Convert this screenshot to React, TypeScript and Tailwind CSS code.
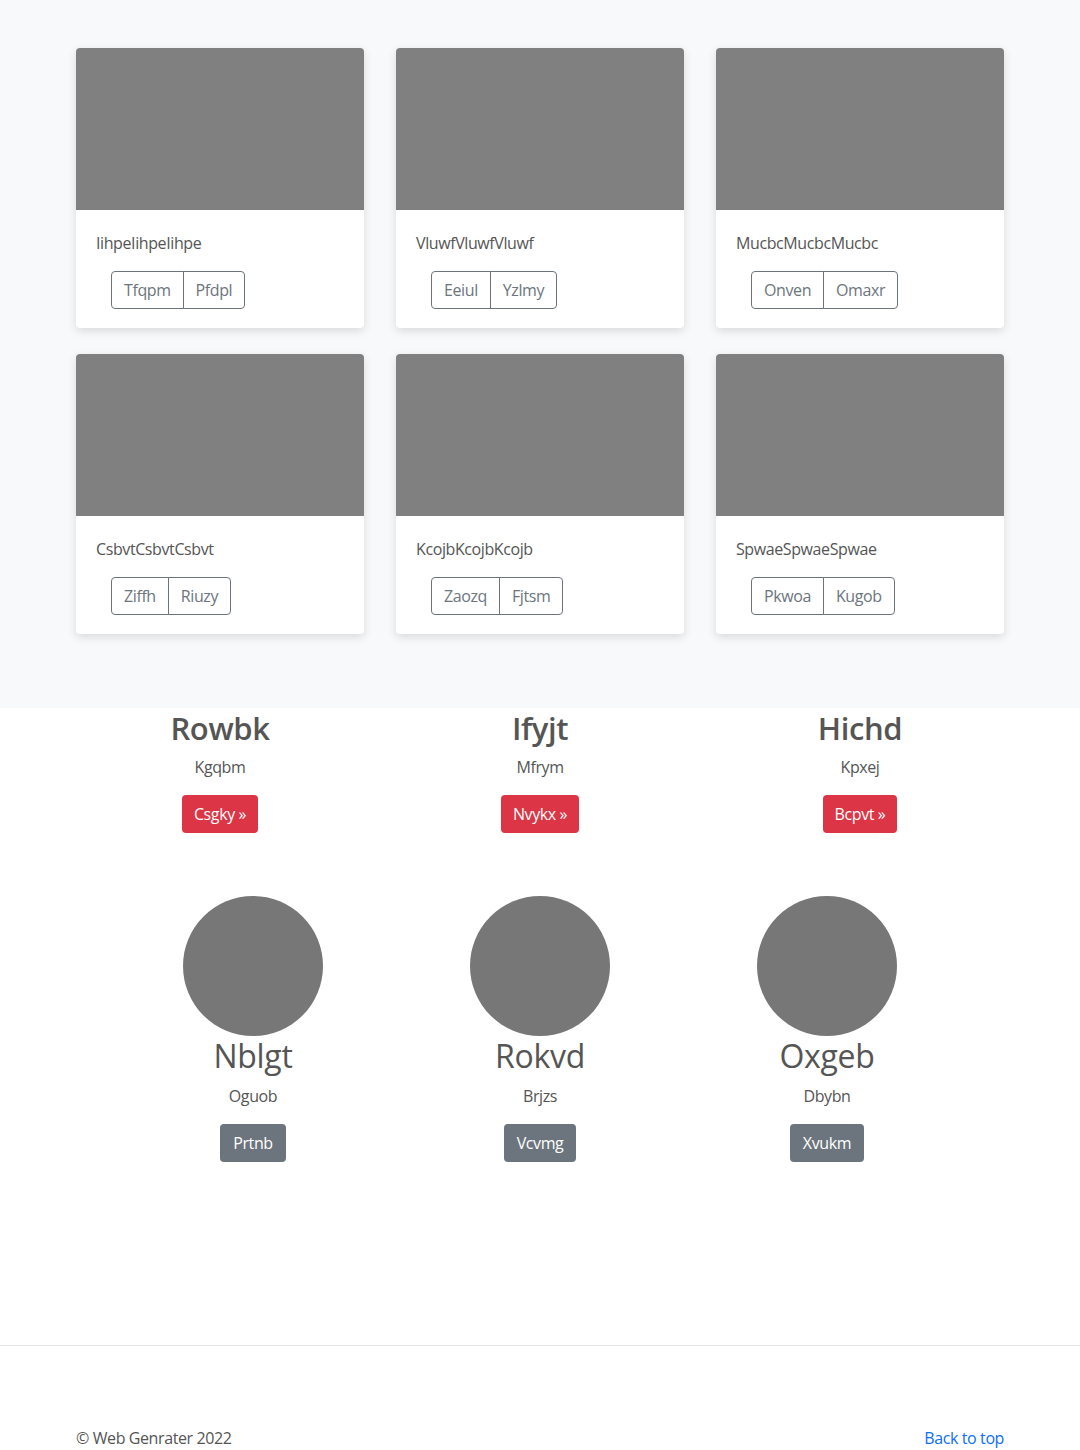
const cards = [
  { title: "IihpeIihpeIihpe", a: "Tfqpm", b: "Pfdpl" },
  { title: "VluwfVluwfVluwf", a: "Eeiul", b: "Yzlmy" },
  { title: "MucbcMucbcMucbc", a: "Onven", b: "Omaxr" },
  { title: "CsbvtCsbvtCsbvt", a: "Ziffh", b: "Riuzy" },
  { title: "KcojbKcojbKcojb", a: "Zaozq", b: "Fjtsm" },
  { title: "SpwaeSpwaeSpwae", a: "Pkwoa", b: "Kugob" },
];

const features = [
  { title: "Rowbk", text: "Kgqbm", btn: "Csgky" },
  { title: "Ifyjt", text: "Mfrym", btn: "Nvykx" },
  { title: "Hichd", text: "Kpxej", btn: "Bcpvt" },
];

const people = [
  { name: "Nblgt", text: "Oguob", btn: "Prtnb" },
  { name: "Rokvd", text: "Brjzs", btn: "Vcvmg" },
  { name: "Oxgeb", text: "Dbybn", btn: "Xvukm" },
];

export default function App() {
  return (
    <div className="min-h-[1450px] bg-white text-[16px] leading-[1.5] tracking-[-0.025em] text-[#555]" style={{ fontFamily: '"Open Sans", "Liberation Sans", sans-serif' }}>
      {/* Album */}
      <section className="bg-[#f8f9fa] pt-12 pb-[74px]">
        <div className="mx-auto grid w-[928px] grid-cols-3 gap-x-8 gap-y-[26px]">
          {cards.map((c) => (
            <div key={c.title} className="overflow-hidden rounded bg-white shadow-[0_3px_10px_rgba(0,0,0,0.13)]">
              <div className="h-[162px] bg-[#808080]" />
              <div className="px-5 pt-[21px] pb-[19px]">
                <p className="mb-4">{c.title}</p>
                <div className="ml-[15px] inline-flex">
                  <button className="h-[38px] rounded-l border border-[#6c757d] px-3 text-[#6c757d]">{c.a}</button>
                  <button className="-ml-px h-[38px] rounded-r border border-[#6c757d] px-3 text-[#6c757d]">{c.b}</button>
                </div>
              </div>
            </div>
          ))}
        </div>
      </section>

      {/* Features */}
      <section className="mx-auto grid w-[960px] grid-cols-3">
        {features.map((f) => (
          <div key={f.title} className="flex flex-col items-center">
            <h2 className="mb-2 pt-[2px] text-[31px] leading-[1.2] font-semibold">{f.title}</h2>
            <p className="mb-4">{f.text}</p>
            <button className="h-[38px] rounded bg-[#dc3545] px-3 text-white">{f.btn} »</button>
          </div>
        ))}
      </section>

      {/* People */}
      <section className="mx-auto mt-[63px] grid w-[861px] grid-cols-3">
        {people.map((p) => (
          <div key={p.name} className="flex flex-col items-center">
            <div className="h-[140px] w-[140px] rounded-full bg-[#777]" />
            <h2 className="mb-2 pt-px text-[32px] leading-[1.2] font-normal tracking-[-0.01em]">{p.name}</h2>
            <p className="mb-4">{p.text}</p>
            <button className="h-[38px] rounded bg-[#6c757d] px-[13px] text-white">{p.btn}</button>
          </div>
        ))}
      </section>

      {/* Footer */}
      <footer className="mt-[183px] border-t border-[#e5e5e5] pt-[80px]">
        <div className="mx-auto flex w-[928px] items-center justify-between">
          <p>© Web Genrater 2022</p>
          <a href="#" className="text-[#0d6efd]">Back to top</a>
        </div>
      </footer>
    </div>
  );
}
